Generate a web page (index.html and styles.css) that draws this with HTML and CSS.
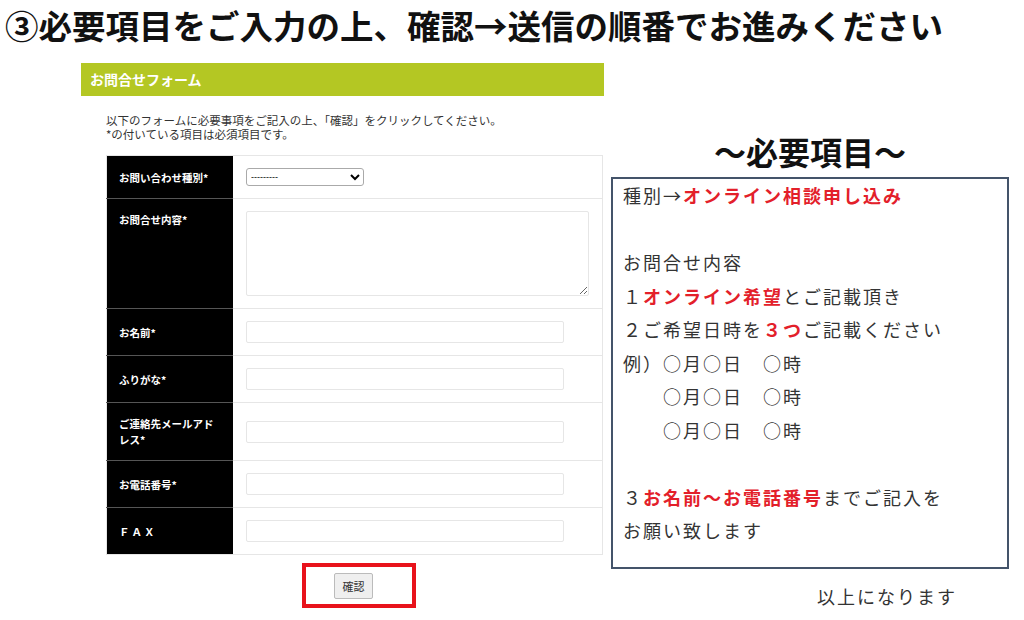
FILE: index.html
```html
<!DOCTYPE html>
<html lang="ja">
<head>
  <meta charset="UTF-8" />
  <meta name="viewport" content="width=device-width, initial-scale=1.0" />
  <title>お問合せフォーム</title>
  <link rel="stylesheet" href="styles.css">
</head>
<body>
  <h1 class="lead">③必要項目をご入力の上、確認→送信の順番でお進みください</h1>

  <div class="content">
    <div class="form-panel">
      <div class="panel-head">お問合せフォーム</div>
      <p class="intro">以下のフォームに必要事項をご記入の上、「確認」をクリックしてください。<br>*の付いている項目は必須項目です。</p>

      <table class="form-table">
        <tr>
          <th>お問い合わせ種別*</th>
          <td>
            <select class="kind">
              <option>---------</option>
            </select>
          </td>
        </tr>
        <tr>
          <th class="top">お問合せ内容*</th>
          <td><textarea></textarea></td>
        </tr>
        <tr>
          <th>お名前*</th>
          <td><input type="text" /></td>
        </tr>
        <tr>
          <th>ふりがな*</th>
          <td><input type="text" /></td>
        </tr>
        <tr>
          <th>ご連絡先メールアドレス*</th>
          <td><input type="text" /></td>
        </tr>
        <tr>
          <th>お電話番号*</th>
          <td><input type="text" /></td>
        </tr>
        <tr>
          <th class="fax">ＦＡＸ</th>
          <td><input type="text" /></td>
        </tr>
      </table>

      <div class="submit-mark">
        <button type="button">確認</button>
      </div>
    </div>

    <div class="guide">
      <h2>～必要項目～</h2>
      <div class="guide-box">
        <p>種別→<strong>オンライン相談申し込み</strong></p>
        <p class="spaced">お問合せ内容</p>
        <p>１<strong>オンライン希望</strong>とご記載頂き</p>
        <p>２ご希望日時を<strong>３つ</strong>ご記載ください</p>
        <p>例）○月○日　○時</p>
        <p>　　○月○日　○時</p>
        <p>　　○月○日　○時</p>
        <p class="spaced">３<strong>お名前～お電話番号</strong>までご記入を</p>
        <p>お願い致します</p>
      </div>
      <p class="guide-end">以上になります</p>
    </div>
  </div>
</body>
</html>
```

FILE: styles.css
```css
body {
  margin: 0;
  padding: 0;
  background-color: #fff;
  font-family: "Noto Sans CJK JP", "Noto Sans", sans-serif;
  color: #222;
}

.lead {
  margin: 0;
  padding-left: 5px;
  font-size: 33.5px;
  line-height: 50px;
  font-weight: bold;
  color: #111;
  white-space: nowrap;
}

.content {
  display: flex;
  gap: 7px;
  margin-top: 13px;
  padding-left: 81px;
}

/* left: form */
.form-panel {
  width: 523px;
}

.panel-head {
  height: 33px;
  line-height: 33px;
  padding-left: 9px;
  background-color: #b4c723;
  color: #fff;
  font-size: 14px;
  font-weight: bold;
}

.intro {
  margin: 17px 0 14px 25px;
  font-size: 11.5px;
  line-height: 14px;
  color: #333;
}

.form-table {
  width: 497px;
  margin-left: 25px;
  border-collapse: collapse;
  border: 1px solid #e6e6e6;
}

.form-table th {
  width: 102px;
  padding: 13px 12px 12px;
  background-color: #000;
  color: #fff;
  font-size: 10.5px;
  line-height: 16px;
  font-weight: bold;
  text-align: left;
  vertical-align: middle;
  border-bottom: 1px solid #555;
}

.form-table th.top {
  vertical-align: top;
}

.form-table th.fax {
  letter-spacing: 2px;
}

.form-table td {
  padding: 12px 13px;
  border-bottom: 1px solid #e6e6e6;
  vertical-align: middle;
}

.form-table tr:last-child th,
.form-table tr:last-child td {
  border-bottom: none;
}

.form-table input {
  display: block;
  width: 318px;
  height: 22px;
  box-sizing: border-box;
  border: 1px solid #e6e6e6;
  border-radius: 2px;
  margin: 0;
}

.form-table textarea {
  display: block;
  width: 343px;
  height: 85px;
  box-sizing: border-box;
  border: 1px solid #e6e6e6;
  border-radius: 2px;
  margin: 0;
}

.kind {
  display: block;
  width: 118px;
  height: 18px;
  font-size: 9px;
  border: 1px solid #aaa;
  border-radius: 3px;
  background-color: #fff;
  margin: 0;
}

.submit-mark {
  width: 106px;
  margin: 8px 0 0 221px;
  padding: 6px 0 5px 0;
  border: 4px solid #e8121b;
}

.submit-mark button {
  display: block;
  width: 39px;
  height: 26px;
  margin-left: 28px;
  padding: 0;
  font-family: "Noto Sans CJK JP", sans-serif;
  font-size: 11px;
  color: #333;
  background-color: #efefef;
  border: 1px solid #bbb;
  border-radius: 2px;
}

/* right: guide */
.guide {
  width: 398px;
  padding-top: 68px;
}

.guide h2 {
  margin: 0 0 6px;
  font-size: 32px;
  line-height: 40px;
  font-weight: bold;
  color: #111;
  text-align: center;
}

.guide-box {
  height: 388px;
  padding: 0 10px;
  border: 2px solid #44546a;
}

.guide-box p {
  margin: 0;
  font-size: 18px;
  line-height: 33.5px;
  letter-spacing: 2px;
  color: #333;
  white-space: nowrap;
}

.guide-box p.spaced {
  margin-top: 33.5px;
}

.guide-box strong {
  color: #e3202a;
  font-weight: bold;
}

.guide-end {
  margin: 11px 0 0 206px;
  font-size: 18px;
  line-height: 33.5px;
  letter-spacing: 2px;
  color: #333;
}
```
